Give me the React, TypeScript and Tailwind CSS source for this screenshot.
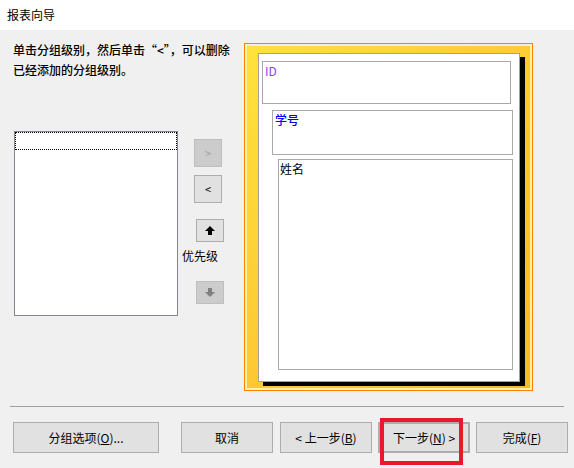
import React from "react";

const font = { fontFamily: '"Microsoft YaHei UI","Noto Sans CJK SC","Noto Sans",sans-serif' };

function Btn({ children, className = "" }: { children: React.ReactNode; className?: string }) {
  return (
    <div className={"flex items-center justify-center bg-[#e1e1e1] border border-[#adadad] text-[12px] text-black " + className}>
      {children}
    </div>
  );
}

export default function App() {
  return (
    <div className="w-[574px] h-[468px] bg-[#f0f0f0] relative overflow-hidden text-black" style={font}>
      <div className="h-[30px] bg-white pl-[7px] text-[12px] leading-[30px]">报表向导</div>
      <div className="flex pt-[10px] h-[376px]">
        <div className="w-[244px] pl-[13px] flex flex-col">
          <div className="text-[12px] leading-[20px] font-medium">
            <div>单击分组级别，然后单击“&lt;”，可以删除</div>
            <div>已经添加的分组级别。</div>
          </div>
          <div className="flex mt-[51px]">
            <div className="ml-[1px] w-[164px] h-[185px] bg-white border border-[#828790]">
              <div className="h-[18px] border border-dotted border-black"></div>
            </div>
            <div className="flex flex-col w-[48px] ml-[4px]">
              <div className="ml-[12px] mt-[8px] w-[28px] h-[28px] bg-[#cccccc] border border-[#bfbfbf] flex items-center justify-center text-[11px] text-[#a0a0a0]">&gt;</div>
              <div className="ml-[12px] mt-[8px] w-[28px] h-[28px] bg-[#e1e1e1] border border-[#adadad] flex items-center justify-center text-[11px]">&lt;</div>
              <div className="ml-[14px] mt-[16px] w-[28px] h-[23px] bg-[#e1e1e1] border border-[#adadad] flex items-center justify-center">
                <svg width="10" height="9" viewBox="0 0 10 9"><path d="M5 0 L10 5 L7 5 L7 9 L3 9 L3 5 L0 5 Z" fill="#000" /></svg>
              </div>
              <div className="mt-[6px] text-[12px] leading-[16px] h-[16px]">优先级</div>
              <div className="ml-[14px] mt-[17px] w-[28px] h-[23px] bg-[#cccccc] border border-[#bfbfbf] flex items-center justify-center">
                <svg width="10" height="9" viewBox="0 0 10 9"><path d="M3 0 L7 0 L7 4 L10 4 L5 9 L0 4 L3 4 Z" fill="#808080" /></svg>
              </div>
            </div>
          </div>
        </div>
        <div className="mt-[3px] w-[289px] h-[348px] border border-[#ff7f00] p-px">
          <div className="w-full h-full border border-[#fff1a0] bg-[linear-gradient(135deg,#ffe23c,#fcc632_60%,#f9b82c)] pl-[11px] pt-[7px]">
            <div className="w-[262px] h-[329px] bg-white border border-[#a0a0a0] shadow-[5px_4px_0_#000] pl-[3px] pt-[7px] flex flex-col">
              <div className="w-[249px] h-[43px] border border-[#a9a9a9] pl-[2px] text-[12px] leading-[18px] text-[#8a3dff]">ID</div>
              <div className="ml-[10px] mt-[6px] w-[241px] h-[45px] border border-[#a9a9a9] pl-[2px] text-[12px] leading-[18px] text-[#0000ff] font-medium">学号</div>
              <div className="ml-[16px] mt-[4px] w-[235px] h-[211px] border border-[#a9a9a9] pl-[1px] text-[12px] leading-[18px]">姓名</div>
            </div>
          </div>
        </div>
      </div>
      <div className="ml-[10px] w-[554px] h-px bg-[#a0a0a0]"></div>
      <div className="flex mt-[15px] h-[31px]">
        <Btn className="ml-[13px] w-[146px] h-[31px]">分组选项(<span className="underline">O</span>)...</Btn>
        <Btn className="ml-[22px] w-[92px] h-[31px]">取消</Btn>
        <Btn className="ml-[7px] w-[92px] h-[31px]">&lt; 上一步(<span className="underline">B</span>)</Btn>
        <Btn className="ml-[6px] w-[92px] h-[31px] border-2 border-[#0078d7]">下一步(<span className="underline">N</span>) &gt;</Btn>
        <Btn className="ml-[6px] w-[92px] h-[31px]">完成(<span className="underline">F</span>)</Btn>
      </div>
      <div className="absolute left-[380px] top-[418px] w-[83px] h-[47px] border-[4px] border-[#e8192c]"></div>
    </div>
  );
}
